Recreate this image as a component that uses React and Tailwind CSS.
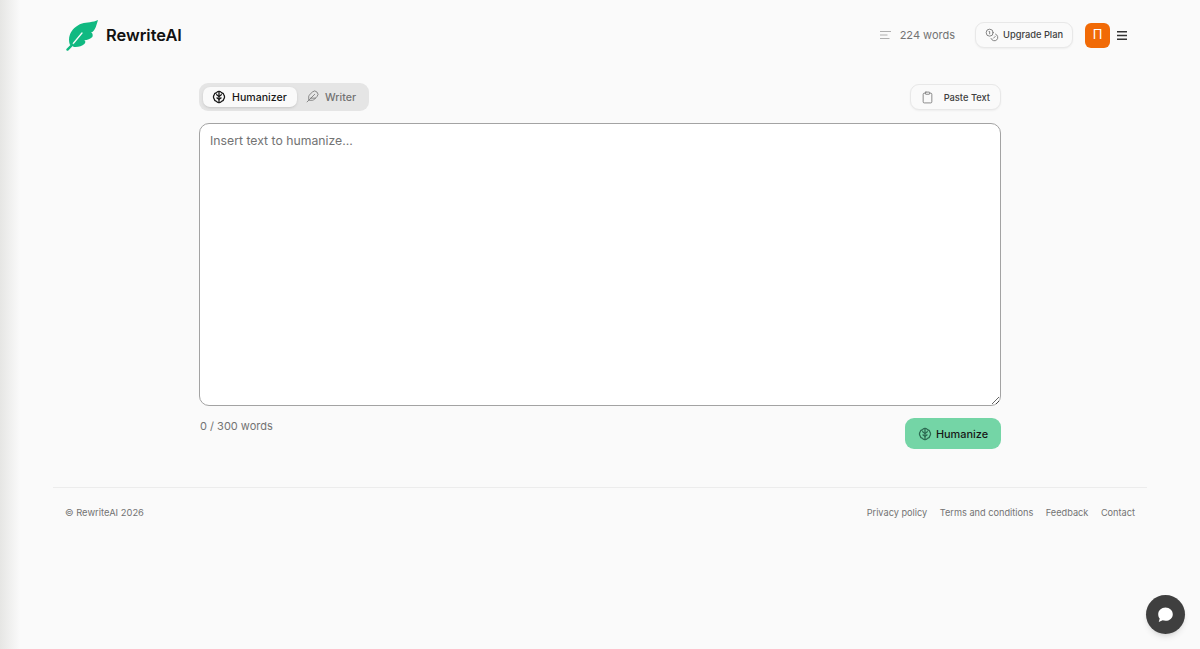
import React from "react";
import { Coins, Clipboard, Feather } from "lucide-react";

function BrainIcon({ className }) {
  return (
    <svg viewBox="0 0 24 24" fill="none" stroke="currentColor" strokeWidth="2.2" strokeLinecap="round" strokeLinejoin="round" className={className}>
      <path d="M12 3v18" />
      <path d="M12 2.500a4.500 4.500 0 0 0-4.300 2.200A5 5 0 0 0 3.400 9 5.500 5.500 0 0 0 2.500 12a5 5 0 0 0 1.200 3.200 4.800 4.800 0 0 0 4 4.300A4.500 4.500 0 0 0 12 21.500a4.500 4.500 0 0 0 4.300-2 4.800 4.800 0 0 0 4-4.300 5 5 0 0 0 1.200-3.200 5.500 5.500 0 0 0-.9-3 5 5 0 0 0-4.300-4.300A4.500 4.500 0 0 0 12 2.500Z" />
      <path d="M12 11 8 8M12 11l4-3M12 16l-3.500-2.500M12 16l3.500-2.500" />
    </svg>
  );
}

function LeafLogo() {
  return (
    <svg viewBox="0 0 32 32" className="w-8 h-8 shrink-0">
      <path fill="#10b981" d="M32 1 C27 3.600 21 3 16 4.600 C10 6.500 5.800 11 3.800 16 C2.700 19 2.800 22.500 3.800 25.500 L8 28 C12 28.400 16 27.200 18.300 25 C19.300 24 19.600 23 19 21.800 L18 21.200 C21.500 21.200 24.500 20 26.300 18 C27 16.800 26.800 15.200 26 14 L25 13.500 C27.600 12.800 29 10 29.800 8 C30.600 5.800 31.300 3.400 32 1 Z" />
      <path fill="none" stroke="#fafafa" strokeWidth="1.300" strokeLinecap="round" d="M16 14 L6 26" />
      <path fill="none" stroke="#10b981" strokeWidth="2.400" strokeLinecap="round" d="M6.500 25.500 L1.500 30.600" />
    </svg>
  );
}

export default function App() {
  return (
    <div className="relative min-h-[649px] bg-[#fafafa] overflow-hidden font-['Inter',sans-serif] text-[#171717]">
      <div className="absolute inset-y-0 left-0 w-[20px] bg-gradient-to-r from-[#e6e6e4] to-[#fafafa]" />

      <header className="relative flex items-center justify-between h-[70px] pl-[66px] pr-[73px]">
        <div className="flex items-center gap-2">
          <LeafLogo />
          <span className="text-[16.4px] font-semibold text-[#111111]">RewriteAI</span>
        </div>
        <div className="flex items-center">
          <div className="flex items-center gap-[9px] mr-[20px] text-[#737373]">
            <svg viewBox="0 0 11 8" className="w-[11px] h-2 text-[#b0b0b0]" fill="none" stroke="currentColor" strokeWidth="1">
              <path d="M0 .5h11M0 4h7.500M0 7.500h9.500" />
            </svg>
            <span className="text-[11px]">224 words</span>
          </div>
          <button className="flex items-center gap-[4px] h-[26px] w-[98px] pl-[9px] rounded-[9px] border border-[#e8e8e8] bg-[#fafafa] shadow-xs text-[9.300px] font-medium text-[#404040]">
            <Coins className="w-[14px] h-[14px] text-[#737373]" strokeWidth={1.5} />
            Upgrade Plan
          </button>
          <div className="ml-3 w-[25px] h-[25px] rounded-[6px] bg-[#f16a06] flex items-center justify-center text-white text-[13px]">
            <span>Π</span>
          </div>
          <svg viewBox="0 0 10 9" className="ml-[7px] w-[10px] h-[9px] text-[#333333]" fill="none" stroke="currentColor" strokeWidth="1.500">
            <path d="M0 .8h10M0 4.500h10M0 8.200h10" />
          </svg>
        </div>
      </header>

      <main className="relative w-[802px] mx-auto mt-[13px]">
        <div className="flex items-center justify-between h-[28px]">
          <div className="flex items-center h-[28px] w-[170px] p-1 rounded-[9px] bg-[#e5e5e5]">
            <div className="flex items-center gap-[6px] w-[94px] h-5 pl-[9px] rounded-[7px] bg-[#fafafa] shadow-sm text-[10.600px] font-medium text-[#171717]">
              <BrainIcon className="w-[14px] h-[14px]" />
              <span className="pt-[1px]">Humanizer</span>
            </div>
            <div className="flex items-center gap-[6px] pl-[9px] text-[10.600px] font-medium text-[#737373]">
              <Feather className="w-[13px] h-[13px]" strokeWidth={1.5} />
              <span className="pt-[1px]">Writer</span>
            </div>
          </div>
          <button className="flex items-center justify-between w-[91px] h-[26px] pl-[10px] pr-[10px] rounded-[9px] border border-[#e8e8e8] bg-[#fafafa] shadow-xs text-[9.300px] font-medium text-[#404040]">
            <Clipboard className="w-[13px] h-[13px] text-[#737373]" strokeWidth={1.5} />
            <span className="pt-[1px]">Paste Text</span>
          </button>
        </div>

        <textarea
          placeholder="Insert text to humanize..."
          className="block w-full h-[283px] mt-3 px-[10px] py-2 rounded-[10px] border border-[#a3a3a3] bg-white text-[12.250px] leading-[17px] outline-none placeholder:text-[#737373]"
        />

        <div className="flex items-start justify-between mt-3">
          <span className="text-[11px] text-[#737373] ml-[1px]">0 / 300 words</span>
          <button className="flex items-center justify-center gap-[4px] w-[96px] h-[31px] pt-[1px] rounded-[9px] bg-[#74d5a6] text-[10.900px] font-medium text-[#171717]">
            <BrainIcon className="w-[14px] h-[14px] text-[#2d6b52]" />
            Humanize
          </button>
        </div>
      </main>

      <footer className="relative mx-[53px] mt-[38px] border-t border-[#ececec] flex items-center justify-between pl-[12px] pr-[12px] pt-[18px] text-[9.200px] text-[#737373]">
        <span className="text-[9.400px]">© RewriteAI 2026</span>
        <nav className="flex items-center gap-[12.5px]">
          <span>Privacy policy</span>
          <span>Terms and conditions</span>
          <span>Feedback</span>
          <span>Contact</span>
        </nav>
      </footer>

      <div className="absolute right-[15px] bottom-[15px] w-[39px] h-[39px] rounded-full bg-[#3f3f3f] shadow-md flex items-center justify-center">
        <svg viewBox="0 0 24 24" className="w-[19px] h-[19px]" fill="white">
          <path d="M12 3c5.200 0 9.200 3.700 9.200 8.600S17.200 20 12 20c-1.300 0-2.500-.2-3.600-.6L3.500 21.500l1.200-4.300C3.500 15.700 2.800 13.800 2.800 11.600 2.800 6.700 6.800 3 12 3Z" />
        </svg>
      </div>
    </div>
  );
}
